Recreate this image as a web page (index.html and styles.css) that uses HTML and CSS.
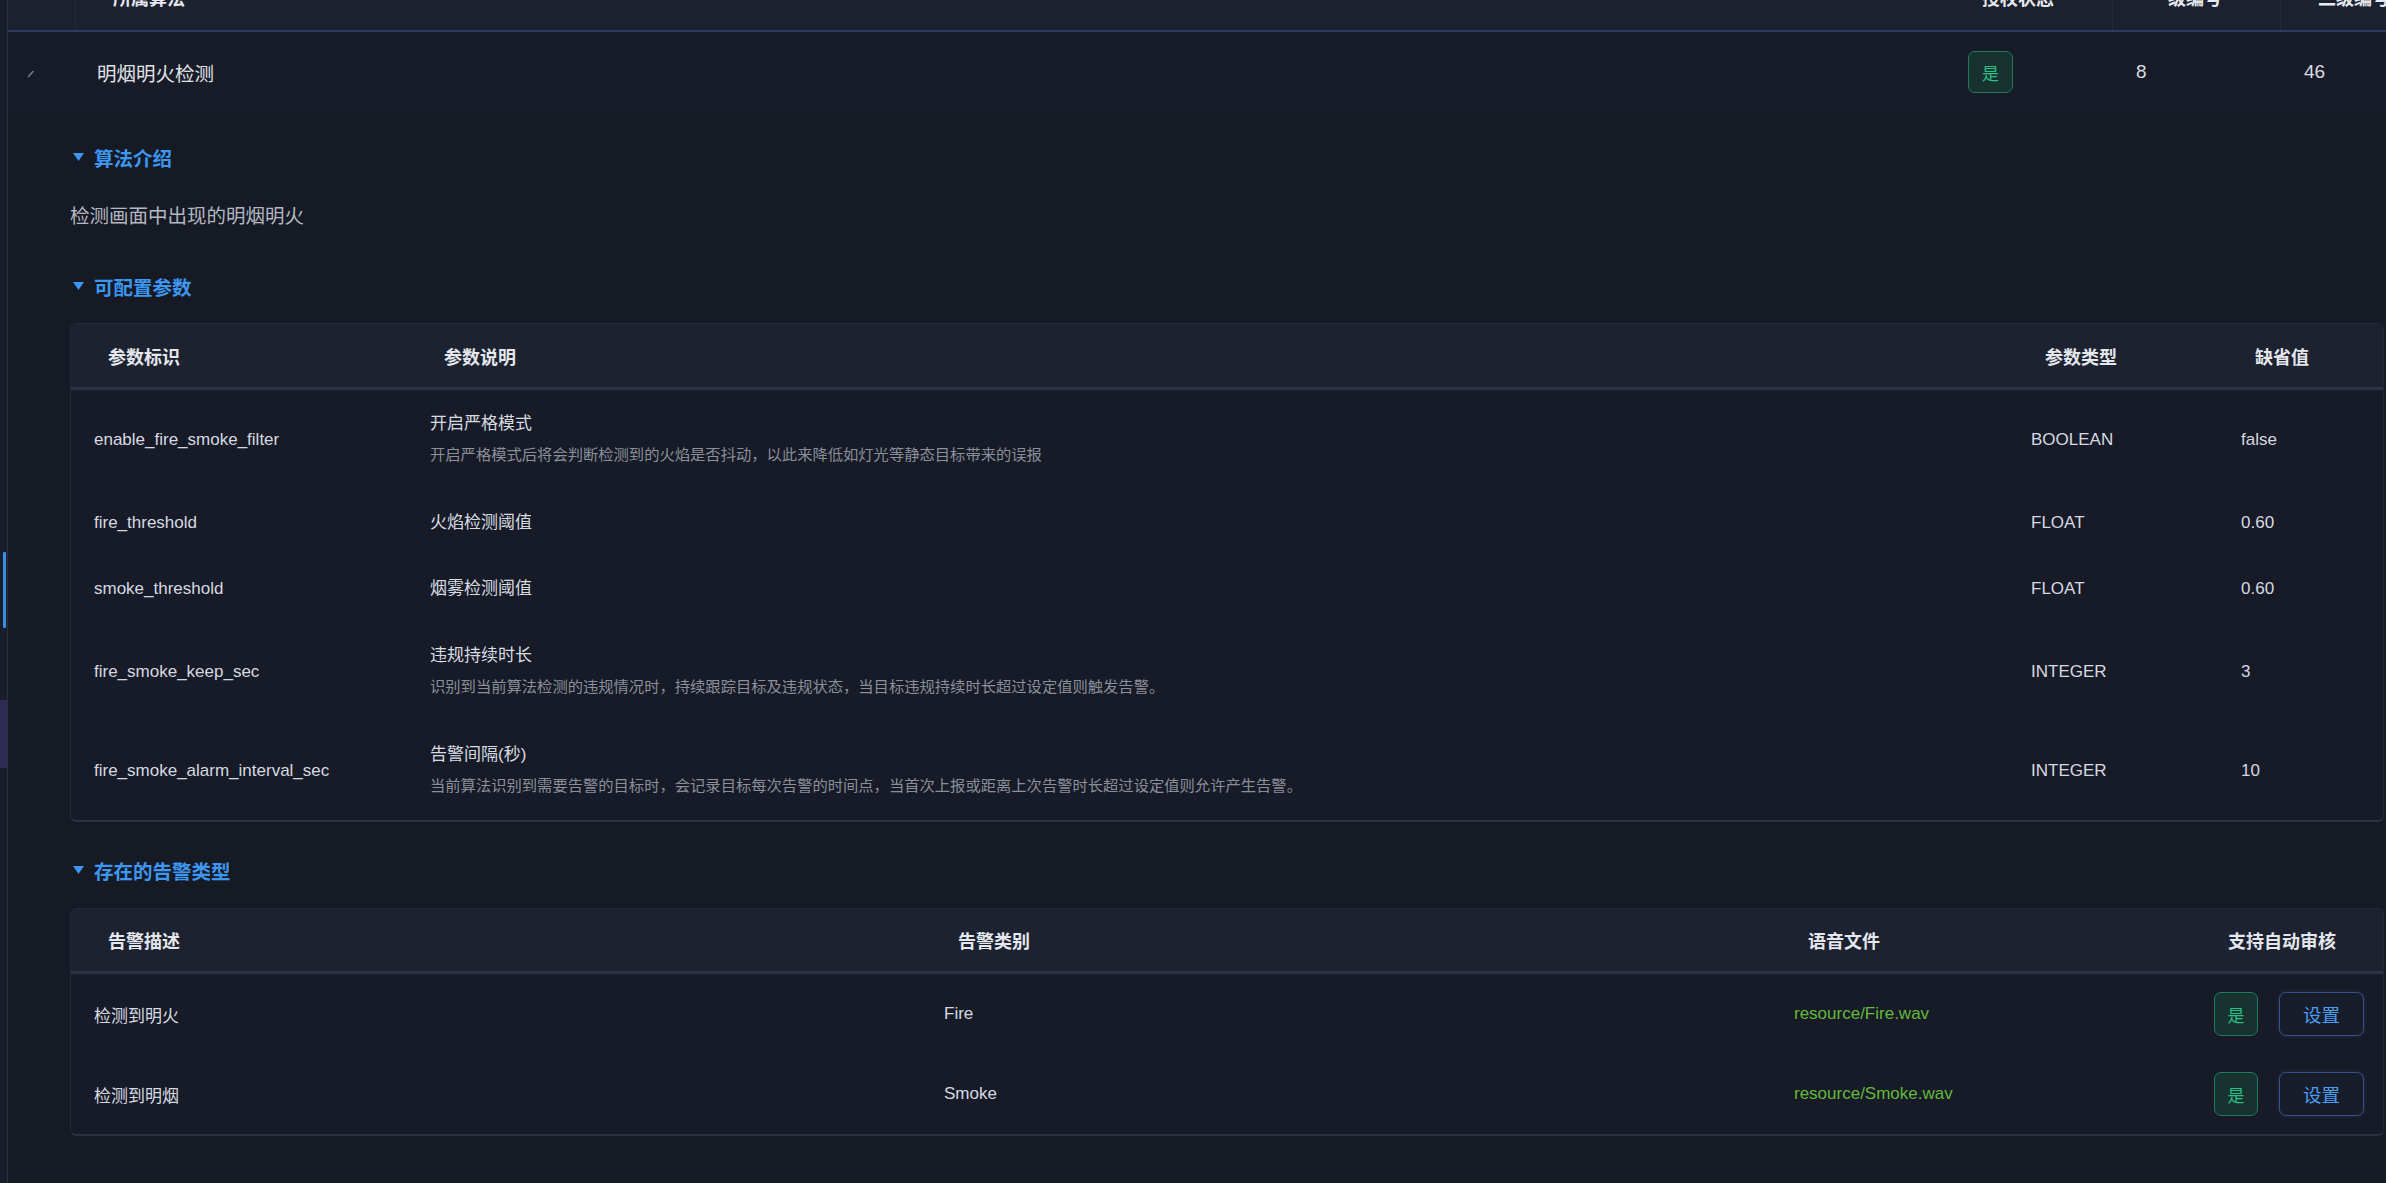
FILE: index.html
```html
<!DOCTYPE html>
<html lang="zh-CN">
<head>
<meta charset="utf-8">
<title>算法详情</title>
<link rel="stylesheet" href="styles.css">
</head>
<body>
<div class="app">
  <aside class="rail">
    <span class="rail-active"></span>
    <span class="rail-purple"></span>
  </aside>
  <main class="main">
    <div class="algo-table">
      <div class="algo-head">
        <div class="ah-cell ah-expand"></div>
        <div class="ah-cell ah-sep">所属算法</div>
        <div class="ah-cell">授权状态</div>
        <div class="ah-cell ah-sep">一级编号</div>
        <div class="ah-cell ah-sep">二级编号</div>
      </div>
      <div class="algo-row">
        <div class="ar-cell ar-expand">
          <svg class="expand-icon" width="8" height="10" viewBox="0 0 8 10"><path d="M1.5 8.5 L6 3.5" stroke="#7d8393" stroke-width="1.4" stroke-linecap="round" fill="none"/></svg>
        </div>
        <div class="ar-cell ar-name">明烟明火检测</div>
        <div class="ar-cell"><span class="tag tag-lg">是</span></div>
        <div class="ar-cell ar-num">8</div>
        <div class="ar-cell ar-num ar-num2">46</div>
      </div>
    </div>

    <div class="detail">
      <h3 class="sec-title sec-first"><svg class="caret" width="11" height="8" viewBox="0 0 11 8"><polygon points="0,0 11,0 5.5,8" fill="#3d96f0"/></svg>算法介绍</h3>
      <p class="intro">检测画面中出现的明烟明火</p>

      <h3 class="sec-title sec-params"><svg class="caret" width="11" height="8" viewBox="0 0 11 8"><polygon points="0,0 11,0 5.5,8" fill="#3d96f0"/></svg>可配置参数</h3>
      <div class="dtable params">
        <div class="dt-head">
          <div class="dh">参数标识</div>
          <div class="dh">参数说明</div>
          <div class="dh">参数类型</div>
          <div class="dh">缺省值</div>
        </div>
        <div class="dt-row two">
          <div class="dc name">enable_fire_smoke_filter</div>
          <div class="dc desc"><div class="d-title">开启严格模式</div><div class="d-sub">开启严格模式后将会判断检测到的火焰是否抖动，以此来降低如灯光等静态目标带来的误报</div></div>
          <div class="dc">BOOLEAN</div>
          <div class="dc">false</div>
        </div>
        <div class="dt-row one">
          <div class="dc name">fire_threshold</div>
          <div class="dc desc"><div class="d-title">火焰检测阈值</div></div>
          <div class="dc">FLOAT</div>
          <div class="dc">0.60</div>
        </div>
        <div class="dt-row one">
          <div class="dc name">smoke_threshold</div>
          <div class="dc desc"><div class="d-title">烟雾检测阈值</div></div>
          <div class="dc">FLOAT</div>
          <div class="dc">0.60</div>
        </div>
        <div class="dt-row two">
          <div class="dc name">fire_smoke_keep_sec</div>
          <div class="dc desc"><div class="d-title">违规持续时长</div><div class="d-sub">识别到当前算法检测的违规情况时，持续跟踪目标及违规状态，当目标违规持续时长超过设定值则触发告警。</div></div>
          <div class="dc">INTEGER</div>
          <div class="dc">3</div>
        </div>
        <div class="dt-row two">
          <div class="dc name">fire_smoke_alarm_interval_sec</div>
          <div class="dc desc"><div class="d-title">告警间隔(秒)</div><div class="d-sub">当前算法识别到需要告警的目标时，会记录目标每次告警的时间点，当首次上报或距离上次告警时长超过设定值则允许产生告警。</div></div>
          <div class="dc">INTEGER</div>
          <div class="dc">10</div>
        </div>
      </div>

      <h3 class="sec-title sec-alarm"><svg class="caret" width="11" height="8" viewBox="0 0 11 8"><polygon points="0,0 11,0 5.5,8" fill="#3d96f0"/></svg>存在的告警类型</h3>
      <div class="dtable alarms">
        <div class="dt-head">
          <div class="dh">告警描述</div>
          <div class="dh">告警类别</div>
          <div class="dh">语音文件</div>
          <div class="dh">支持自动审核</div>
        </div>
        <div class="dt-row arow">
          <div class="dc">检测到明火</div>
          <div class="dc">Fire</div>
          <div class="dc file">resource/Fire.wav</div>
          <div class="dc actions"><span class="tag">是</span><button class="btn-set">设置</button></div>
        </div>
        <div class="dt-row arow">
          <div class="dc">检测到明烟</div>
          <div class="dc">Smoke</div>
          <div class="dc file">resource/Smoke.wav</div>
          <div class="dc actions"><span class="tag">是</span><button class="btn-set">设置</button></div>
        </div>
      </div>
    </div>
  </main>
</div>
</body>
</html>
```

FILE: styles.css
```css
* { box-sizing: border-box; }

html, body {
  margin: 0;
  padding: 0;
  width: 2386px;
  height: 1183px;
  overflow: hidden;
  background: #161a25;
  font-family: "Liberation Sans", "Noto Sans CJK SC", sans-serif;
  color: #d6d9e0;
}

.app {
  display: flex;
  height: 1183px;
}

/* left rail edge */
.rail {
  width: 8px;
  flex: 0 0 8px;
  background: #1a1e2a;
  border-right: 1px solid #2a3040;
  display: flex;
  flex-direction: column;
}
.rail-active {
  display: block;
  margin-top: 552px;
  margin-left: 3px;
  width: 3px;
  height: 76px;
  background: #3a8ee6;
  border-radius: 1px;
}
.rail-purple {
  display: block;
  margin-top: 72px;
  width: 7px;
  height: 68px;
  background: #2e2b56;
}

.main {
  flex: 1;
  overflow: hidden;
  min-width: 0;
}

/* outer algorithm table (scrolled) */
.algo-table {
  margin-top: -36px;
  width: 2440px;
}
.algo-head {
  display: grid;
  grid-template-columns: 67px 1870px 167px 168px 168px;
  height: 68px;
  background: #1c2130;
  border-bottom: 2px solid #2c3a5c;
}
.ah-cell {
  display: flex;
  align-items: center;
  padding-left: 37px;
  font-size: 18px;
  font-weight: 700;
  color: #e6e8ee;
}
.ah-expand { padding-left: 0; }
.ah-sep { border-left: 1px solid #252b3a; }

.algo-row {
  display: grid;
  grid-template-columns: 67px 1870px 167px 168px 168px;
  height: 80px;
  background: #181c28;
}
.ar-cell {
  display: flex;
  align-items: center;
  padding-left: 23px;
  font-size: 19.5px;
  color: #e0e3ea;
}
.ar-expand { padding-left: 19px; }
.expand-icon { display: block; margin-top: 2px; }
.ar-name { padding-left: 22px; }
.ar-num { padding-left: 24px; font-size: 19px; color: #d9dce3; }
.ar-num2 { padding-left: 24px; }

/* detail */
.detail {
  padding: 0 2px 0 62px;
}

.sec-title {
  margin: 0;
  height: 28px;
  display: flex;
  align-items: center;
  gap: 10px;
  padding-left: 3px;
  font-size: 19.5px;
  font-weight: 700;
  color: #3d96f0;
}
.caret { display: block; flex: 0 0 11px; }
.sec-first { margin-top: 31px; }
.sec-params { margin-top: 42px; }
.sec-alarm { margin-top: 34px; }

.intro {
  margin: 31px 0 0 0;
  height: 28px;
  line-height: 28px;
  font-size: 19.5px;
  color: #b3b7c1;
}

.dtable {
  margin-top: 23px;
  border: 1px solid #232938;
  border-bottom: 2px solid #2a3142;
  border-radius: 6px;
  overflow: hidden;
  background: #171b27;
}
.alarms { margin-top: 24px; }

.dt-head,
.dt-row {
  display: grid;
}
.params .dt-head,
.params .dt-row { grid-template-columns: 336px 1601px 210px 1fr; }
.alarms .dt-head,
.alarms .dt-row { grid-template-columns: 850px 850px 420px 1fr; }

.dt-head {
  height: 66px;
  background: #1d2230;
  border-bottom: 3px solid #2a3244;
}
.alarms .dt-head { height: 65px; }

.dh {
  display: flex;
  align-items: center;
  padding-left: 37px;
  font-size: 18px;
  font-weight: 700;
  color: #e4e7ed;
}

.dc {
  display: flex;
  align-items: center;
  padding-left: 23px;
  font-size: 17px;
  color: #d6d9e0;
}

.dt-row.one { height: 66px; }
.dt-row.two { height: 99px; }
.params .dt-row.one:nth-child(3) { height: 67px; }

.dc.desc {
  flex-direction: column;
  align-items: flex-start;
  justify-content: center;
}
.d-title {
  line-height: 24px;
  font-size: 17px;
  color: #d8dbe1;
}
.d-sub {
  margin-top: 8px;
  line-height: 22px;
  font-size: 15.3px;
  color: #8a8f9a;
}
.two .d-title { margin-top: -2px; }

.arow { height: 80px; }
.dc.file { color: #63b93a; }

.actions { padding-left: 23px; }

.tag {
  display: inline-flex;
  align-items: center;
  justify-content: center;
  width: 44px;
  height: 44px;
  border: 1.5px solid #1f7a5d;
  border-radius: 7px;
  background: #17332f;
  color: #2cbf88;
  font-size: 17px;
  font-family: "Noto Sans CJK SC", sans-serif;
}
.tag-lg {
  width: 45px;
  height: 42px;
  margin-top: 0;
}

.btn-set {
  margin-left: 21px;
  width: 85px;
  height: 44px;
  border: 1.5px solid #34538c;
  border-radius: 7px;
  background: #181d2b;
  color: #4a9df5;
  font-size: 18.5px;
  font-family: "Noto Sans CJK SC", sans-serif;
  box-shadow: 0 0 4px rgba(64, 140, 255, 0.2);
  padding: 0;
}
```
